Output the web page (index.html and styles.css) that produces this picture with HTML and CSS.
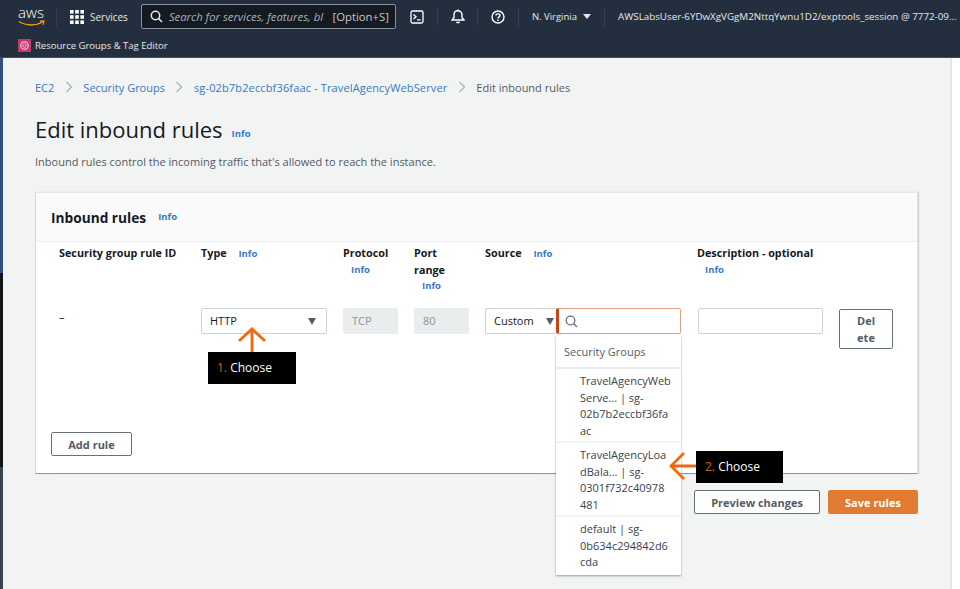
FILE: index.html
```html
<!DOCTYPE html>
<html lang="en">
<head>
    <meta charset="UTF-8">
    <title>Edit inbound rules | EC2</title>
    <link rel="stylesheet" href="styles.css">
</head>
<body>
    <header class="nav">
        <div class="nav-top">
            <div class="logo">
                <span class="logo-text">aws</span>
                <svg class="logo-smile" width="27" height="7" viewBox="0 0 27 7"><path d="M1 1.500C8 6 18 6 24.500 2" fill="none" stroke="#f90" stroke-width="1.400"/><path d="M22 1.200L26 1L25 4.800" fill="none" stroke="#f90" stroke-width="1.200"/></svg>
            </div>
            <div class="nav-sep sep-logo"></div>
            <svg class="grid-icon" width="14" height="14" viewBox="0 0 14 14" fill="#fff"><rect width="3.600" height="3.600"/><rect x="5.200" width="3.600" height="3.600"/><rect x="10.400" width="3.600" height="3.600"/><rect y="5.200" width="3.600" height="3.600"/><rect x="5.200" y="5.200" width="3.600" height="3.600"/><rect x="10.400" y="5.200" width="3.600" height="3.600"/><rect y="10.400" width="3.600" height="3.600"/><rect x="5.200" y="10.400" width="3.600" height="3.600"/><rect x="10.400" y="10.400" width="3.600" height="3.600"/></svg>
            <span class="services">Services</span>
            <div class="nav-search">
                <svg width="13" height="13" viewBox="0 0 13 13" fill="none" stroke="#e6e8e8" stroke-width="1.500"><circle cx="5.500" cy="5.500" r="4.200"/><path d="M8.600 8.600L12 12"/></svg>
                <span class="nav-search-text">Search for services, features, bl</span>
                <span class="nav-search-key">[Option+S]</span>
            </div>
            <svg class="nav-icon icon-term" width="14" height="14" viewBox="0 0 14 14" fill="none" stroke="#fff" stroke-width="1.300"><rect x="1" y="1" width="12" height="12" rx="1.500"/><path d="M3.500 4.500L6 6.700L3.500 9M7 9.800H10.500"/></svg>
            <div class="nav-sep sep-term"></div>
            <svg class="nav-icon icon-bell" width="14" height="15" viewBox="0 0 14 15" fill="none" stroke="#fff" stroke-width="1.400"><path d="M1 11H13L11 8.500V5.800C11 3.500 9.300 1.800 7 1.800S3 3.500 3 5.800V8.500Z"/><path d="M5.500 12.800C6 14 8 14 8.500 12.800M7 .5V2"/></svg>
            <div class="nav-sep sep-bell"></div>
            <svg class="nav-icon icon-help" width="14" height="14" viewBox="0 0 14 14" fill="none" stroke="#fff" stroke-width="1.400"><circle cx="7" cy="7" r="6"/><path d="M5 5.500C5 3.300 9 3.300 9 5.500C9 7 7 6.800 7 8.500M7 9.500V11"/></svg>
            <div class="nav-sep sep-help"></div>
            <span class="region">N. Virginia</span>
            <span class="region-caret"></span>
            <div class="nav-sep sep-region"></div>
            <span class="account">AWSLabsUser-6YDwXgVGgM2NttqYwnu1D2/exptools_session @ 7772-09...</span>
        </div>
        <div class="nav-bottom">
            <svg class="rg-icon" width="13" height="13" viewBox="0 0 13 13"><rect width="13" height="13" fill="#c7386f"/><circle cx="6.500" cy="6.500" r="3.800" fill="none" stroke="#f6d5e2" stroke-width="1.100"/><circle cx="6.500" cy="6.500" r="1.700" fill="none" stroke="#f6d5e2" stroke-width=".8"/></svg>
            <span>Resource Groups &amp; Tag Editor</span>
        </div>
    </header>

    <div class="page">
        <div class="strip">
            <div class="strip-blue"></div>
            <div class="strip-black"></div>
            <div class="strip-grey"></div>
        </div>

        <main class="content">
            <nav class="crumbs">
                <a>EC2</a>
                <svg class="crumb-arrow" width="8" height="12" viewBox="0 0 8 12"><path d="M1.500 1L6.500 6L1.500 11" fill="none" stroke="#aab7b8" stroke-width="1.400"/></svg>
                <a>Security Groups</a>
                <svg class="crumb-arrow" width="8" height="12" viewBox="0 0 8 12"><path d="M1.500 1L6.500 6L1.500 11" fill="none" stroke="#aab7b8" stroke-width="1.400"/></svg>
                <a class="crumb-long">sg-02b7b2eccbf36faac - TravelAgencyWebServer</a>
                <svg class="crumb-arrow" width="8" height="12" viewBox="0 0 8 12"><path d="M1.500 1L6.500 6L1.500 11" fill="none" stroke="#aab7b8" stroke-width="1.400"/></svg>
                <span class="crumb-current">Edit inbound rules</span>
            </nav>

            <div class="title-row">
                <h1>Edit inbound rules</h1>
                <a class="info">Info</a>
            </div>
            <p class="lead">Inbound rules control the incoming traffic that's allowed to reach the instance.</p>

            <section class="card">
                <div class="card-head">
                    <h2>Inbound rules</h2>
                    <a class="info">Info</a>
                </div>
                <div class="rules">
                    <div class="col-head">Security group rule ID</div>
                    <div class="col-head">Type <a class="info">Info</a></div>
                    <div class="col-head">Protocol<a class="info info-block">Info</a></div>
                    <div class="col-head">Port<br>range<a class="info info-block">Info</a></div>
                    <div class="col-head">Source <a class="info">Info</a></div>
                    <div class="col-head">Description - optional<a class="info info-block">Info</a></div>
                    <div></div>

                    <div class="rule-id">–</div>
                    <div class="field select select-type">HTTP<span class="caret"></span></div>
                    <div class="field disabled">TCP</div>
                    <div class="field disabled">80</div>
                    <div class="source">
                        <div class="field select select-source">Custom<span class="caret"></span></div>
                        <div class="field sg-search">
                            <svg width="13" height="13" viewBox="0 0 13 13" fill="none" stroke="#687078" stroke-width="1.300"><circle cx="5.500" cy="5.500" r="4.300"/><path d="M8.700 8.700L12 12"/></svg>
                        </div>
                        <div class="dropdown">
                            <div class="dropdown-title">Security Groups</div>
                            <div class="dropdown-item">TravelAgencyWeb<br>Serve... | sg-<br>02b7b2eccbf36fa<br>ac</div>
                            <div class="dropdown-item">TravelAgencyLoa<br>dBala... | sg-<br>0301f732c40978<br>481</div>
                            <div class="dropdown-item">default | sg-<br>0b634c294842d6<br>cda</div>
                        </div>
                    </div>
                    <div class="field desc"></div>
                    <button class="btn btn-delete">Del<br>ete</button>
                </div>
                <button class="btn btn-add">Add rule</button>
            </section>

            <div class="actions">
                <button class="btn btn-preview">Preview changes</button>
                <button class="btn btn-save">Save rules</button>
            </div>

            <div class="callout callout-one"><span class="num">1.</span> Choose</div>
            <svg class="arrow arrow-up" width="30" height="26" viewBox="0 0 30 26" fill="none" stroke="#f0690f" stroke-width="2.800"><path d="M15 25V2M2 14L15 2L28 14"/></svg>
            <div class="callout callout-two"><span class="num">2.</span> Choose</div>
            <svg class="arrow arrow-left" width="27" height="30" viewBox="0 0 27 30" fill="none" stroke="#f0690f" stroke-width="2.800"><path d="M27 15H2M15 2L2 15L15 28"/></svg>
        </main>

        <aside class="side"></aside>
    </div>
</body>
</html>
```

FILE: styles.css
```css
* {
    box-sizing: border-box;
}
body {
    margin: 0;
    height: 589px;
    overflow: hidden;
    font-family: 'Open Sans', 'Noto Sans', sans-serif;
    font-size: 11px;
    color: #16191f;
    background: #f2f3f3;
}

/* top nav */
.nav {
    height: 58px;
    background: #232f3e;
    color: #e6e8ea;
    border-bottom: 1px solid #3f4a58;
}
.nav-top {
    display: flex;
    align-items: center;
    height: 33px;
    padding-left: 18px;
    white-space: nowrap;
}
.logo {
    width: 26px;
    height: 24px;
    display: flex;
    flex-direction: column;
    align-items: center;
    color: #fff;
}
.logo-text {
    font-size: 15px;
    line-height: 15px;
    font-weight: 300;
}
.logo-smile {
    flex-shrink: 0;
}
.nav-sep {
    width: 1px;
    height: 18px;
    background: #37424f;
}
.sep-logo {
    margin: 0 13px 0 12px;
}
.services {
    margin-left: 6px;
    font-size: 10px;
}
.nav-search {
    display: flex;
    align-items: center;
    width: 255px;
    height: 25px;
    margin-left: 13px;
    padding: 0 6px 0 8px;
    background: #141a22;
    border: 1px solid #8a929b;
    border-radius: 2px;
}
.nav-search svg {
    flex-shrink: 0;
}
.nav-search-text {
    flex: 1;
    margin-left: 6px;
    font-style: italic;
    color: #a9b0b7;
    font-size: 11.300px;
}
.nav-search-key {
    color: #c3c8cc;
    font-size: 11.300px;
}
.icon-term {
    margin-left: 14px;
}
.sep-term {
    margin: 0 13px;
}
.sep-bell {
    margin: 0 13px 0 12px;
}
.sep-help {
    margin: 0 13px;
}
.region {
    font-size: 9.500px;
}
.region-caret {
    width: 0;
    height: 0;
    margin: 0 0 1px 6px;
    border-left: 4px solid transparent;
    border-right: 4px solid transparent;
    border-top: 5px solid #e6e8ea;
}
.sep-region {
    margin: 0 13px;
}
.account {
    font-size: 9.800px;
}
.nav-bottom {
    display: flex;
    align-items: center;
    gap: 4px;
    height: 24px;
    padding-left: 18px;
    font-size: 9.500px;
}

/* page */
.page {
    display: flex;
    height: 531px;
}
.strip {
    width: 3px;
    display: flex;
    flex-direction: column;
}
.strip-blue {
    height: 215px;
    background: #2f5080;
}
.strip-black {
    height: 194px;
    background: #131516;
}
.strip-grey {
    flex: 1;
    background: #3a4350;
}
.content {
    position: relative;
    width: 947px;
    padding: 21px 32px 0;
    background: #f2f3f3;
}
.side {
    flex: 1;
    background: #fff;
    border-left: 2px solid #e4e6e6;
}

.crumbs {
    display: flex;
    align-items: center;
    gap: 10.500px;
    height: 16px;
    margin-bottom: 20px;
}
a {
    color: #3a78bf;
}
.crumb-long {
    letter-spacing: 0.14px;
}
.crumb-current {
    color: #545b64;
}
.title-row {
    display: flex;
    align-items: flex-end;
    gap: 9px;
    height: 28px;
}
h1 {
    margin: 0;
    font-size: 22px;
    line-height: 28px;
    font-weight: 400;
}
.info {
    font-size: 9.500px;
    font-weight: 700;
    line-height: 16.500px;
}
.title-row .info {
    line-height: 19px;
}
.lead {
    margin: 10px 0 0;
    height: 17px;
    line-height: 17px;
    color: #545b64;
}

/* card */
.card {
    height: 282px;
    margin-top: 22px;
    background: #fff;
    border: 1px solid #e4e6e6;
    border-left-color: #d5d9d9;
    border-bottom: 1px solid #8d959e;
    box-shadow: 1px 0 1px #cfd3d3;
}
.card-head {
    display: flex;
    align-items: center;
    gap: 12px;
    height: 49px;
    padding-left: 15px;
    background: #fafafa;
    border-bottom: 1px solid #eaeded;
}
h2 {
    margin: 0;
    font-size: 13.700px;
    font-weight: 700;
}
.rules {
    display: grid;
    grid-template-columns: 142px 142px 71px 71px 212px 142px 54px;
    grid-template-rows: 64px 124px;
    padding: 2px 0 0 23px;
}
.col-head {
    font-size: 10.800px;
    font-weight: 700;
    line-height: 16.500px;
    padding-top: 1px;
}
.col-head .info {
    margin-left: 9px;
}
.col-head .info-block {
    display: block;
    width: 27px;
    margin-left: 0;
    text-align: right;
}
.rule-id {
    line-height: 17px;
}
.field {
    position: relative;
    height: 26px;
    line-height: 24px;
    padding: 0 8px;
    background: #fff;
    border: 1px solid #cdd3d3;
    border-radius: 2px;
}
.select-type {
    width: 126px;
}
.disabled {
    width: 55px;
    color: #8d9499;
    background: #eaeded;
    border-color: #eaeded;
}
.caret {
    position: absolute;
    right: 10px;
    top: 9px;
    width: 0;
    height: 0;
    border-left: 4.500px solid transparent;
    border-right: 4.500px solid transparent;
    border-top: 7px solid #545b64;
}
.source {
    position: relative;
    display: flex;
    width: 196px;
}
.select-source {
    width: 71px;
    border-right: 0;
    border-radius: 2px 0 0 2px;
}
.select-source .caret {
    right: 2px;
}
.sg-search {
    display: flex;
    align-items: center;
    width: 125px;
    padding-left: 6px;
    border: 1px solid #e29f85;
    border-left: 3px solid #c7441a;
}
.dropdown {
    position: absolute;
    left: 71px;
    top: 27px;
    width: 125px;
    background: #fff;
    box-shadow: 0 1px 2px rgba(0, 28, 36, 0.4);
    color: #3b424b;
    z-index: 2;
}
.dropdown-title {
    height: 34px;
    line-height: 34px;
    padding-left: 8px;
    color: #545b64;
    border-bottom: 2px solid #eaeded;
}
.dropdown-item {
    padding: 4px 0 2px 24px;
    line-height: 16.500px;
    border-bottom: 2px solid #f2f3f3;
}
.dropdown-item:last-child {
    padding-bottom: 4px;
    border-bottom: 0;
}
.desc {
    width: 125px;
    margin-left: 1px;
}

/* buttons */
.btn {
    display: block;
    padding: 0;
    font-family: inherit;
    font-size: 11px;
    font-weight: 700;
    color: #545b64;
    background: #fff;
    border: 1px solid #687078;
    border-radius: 2px;
}
.btn-delete {
    width: 54px;
    height: 40px;
    line-height: 17px;
    margin-top: 1px;
}
.btn-add {
    width: 81px;
    height: 24px;
    margin-left: 15px;
}
.actions {
    display: flex;
    justify-content: flex-end;
    gap: 8px;
    margin-top: 16px;
}
.btn-preview {
    width: 126px;
    height: 24px;
}
.btn-save {
    width: 90px;
    height: 24px;
    color: #fff;
    background: #e07b31;
    border-color: #e07b31;
}

/* annotations sitting over the page */
.callout {
    position: absolute;
    height: 32px;
    line-height: 32px;
    background: #000;
    color: #fff;
    font-size: 12px;
    padding-left: 9px;
    z-index: 3;
}
.num {
    color: #d9620f;
}
.callout-one {
    left: 205px;
    top: 294px;
    width: 88px;
}
.callout-two {
    left: 693px;
    top: 393px;
    width: 87px;
}
.arrow {
    position: absolute;
    z-index: 3;
}
.arrow-up {
    left: 234px;
    top: 269px;
}
.arrow-left {
    left: 666px;
    top: 393px;
}
```
